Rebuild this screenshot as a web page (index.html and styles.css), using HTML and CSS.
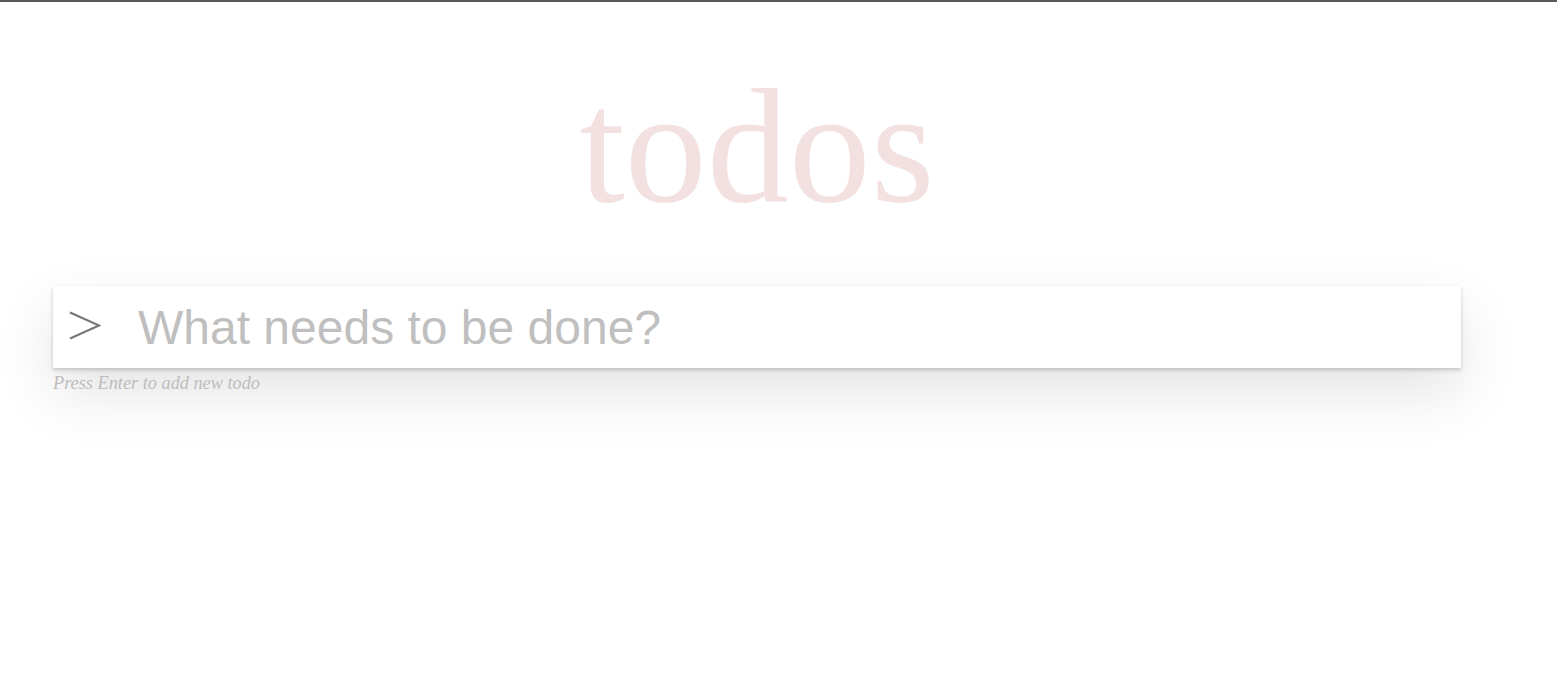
FILE: index.html
```html
<!DOCTYPE html>
<html lang="en">
<head>
<meta charset="utf-8">
<title>todos</title>
<link rel="stylesheet" href="styles.css">
</head>
<body>
<section class="todoapp">
  <header class="header">
    <h1 class="title">todos</h1>
    <div class="new-todo-row">
      <span class="toggle-all" aria-hidden="true">
        <svg width="32" height="30" viewBox="0 0 32 30"><polyline points="1,1.5 30,14.5 1,27.5" fill="none" stroke="#777777" stroke-width="2.2"/></svg>
      </span>
      <input class="new-todo" type="text" placeholder="What needs to be done?">
    </div>
    <p class="hint">Press Enter to add new todo</p>
  </header>
</section>
</body>
</html>
```
FILE: styles.css
```css
html, body {
  margin: 0;
  padding: 0;
}

body {
  background: #ffffff;
  border-top: 2px solid #595959;
  font-family: "Liberation Sans", Arial, sans-serif;
  min-height: 671px;
  box-sizing: border-box;
}

.todoapp {
  margin-left: 53px;
  width: 1408px;
}

.header {
  display: flex;
  flex-direction: column;
}

.title {
  margin: 0;
  padding-top: 62px;
  height: 164px;
  font-family: "Liberation Serif", "Times New Roman", serif;
  font-weight: normal;
  font-size: 164px;
  line-height: 164px;
  text-align: center;
  color: rgba(175, 47, 47, 0.15);
}

.new-todo-row {
  margin-top: 58px;
  height: 82px;
  display: flex;
  align-items: center;
  background: #ffffff;
  box-shadow: 0 2px 4px 0 rgba(0, 0, 0, 0.2), 0 25px 60px 0 rgba(0, 0, 0, 0.11);
}

.toggle-all {
  display: flex;
  margin-left: 16px;
  margin-top: -3px;
}

.new-todo {
  flex: 1;
  margin-left: 37px;
  border: none;
  outline: none;
  background: transparent;
  padding: 0;
  font-family: "Liberation Sans", Arial, sans-serif;
  font-size: 48px;
  color: #4d4d4d;
}

.new-todo::placeholder {
  color: #bfbfbf;
}

.hint {
  margin: 5px 0 0 0;
  font-family: "Liberation Serif", "Times New Roman", serif;
  font-style: italic;
  font-size: 18.3px;
  line-height: 20px;
  color: #bdbdbd;
}
```
